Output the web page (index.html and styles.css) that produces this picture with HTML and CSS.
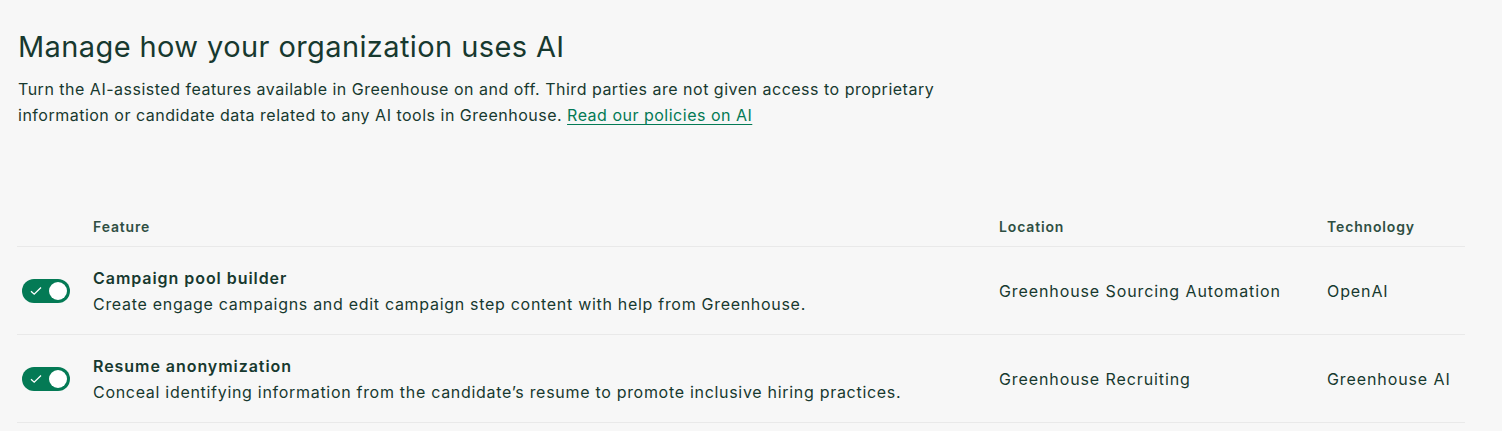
FILE: index.html
```html
<!DOCTYPE html>
<html>
<head>
<meta charset="utf-8">
<link rel="stylesheet" href="styles.css">
</head>
<body>
<main class="page">
  <h1 class="title">Manage how your organization uses AI</h1>
  <p class="intro">Turn the AI-assisted features available in Greenhouse on and off. Third parties are not given access to proprietary<br>information or candidate data related to any AI tools in Greenhouse. <a href="#" class="link">Read our policies on AI</a></p>

  <div class="table">
    <div class="row head">
      <div class="cell"></div>
      <div class="cell">Feature</div>
      <div class="cell">Location</div>
      <div class="cell">Technology</div>
    </div>
    <div class="row">
      <div class="cell toggle-cell">
        <span class="toggle">
          <svg class="check" width="12" height="10" viewBox="0 0 12 10"><path d="M1 5.2 L4.2 8.2 L11 1.5" fill="none" stroke="#fff" stroke-width="1.3"/></svg>
          <span class="knob"></span>
        </span>
      </div>
      <div class="cell">
        <div class="name">Campaign pool builder</div>
        <div class="desc">Create engage campaigns and edit campaign step content with help from Greenhouse.</div>
      </div>
      <div class="cell">Greenhouse Sourcing Automation</div>
      <div class="cell">OpenAI</div>
    </div>
    <div class="row">
      <div class="cell toggle-cell">
        <span class="toggle">
          <svg class="check" width="12" height="10" viewBox="0 0 12 10"><path d="M1 5.2 L4.2 8.2 L11 1.5" fill="none" stroke="#fff" stroke-width="1.3"/></svg>
          <span class="knob"></span>
        </span>
      </div>
      <div class="cell">
        <div class="name">Resume anonymization</div>
        <div class="desc">Conceal identifying information from the candidate’s resume to promote inclusive hiring practices.</div>
      </div>
      <div class="cell">Greenhouse Recruiting</div>
      <div class="cell">Greenhouse AI</div>
    </div>
  </div>
</main>
</body>
</html>
```

FILE: styles.css
```css
html, body {
  margin: 0;
  padding: 0;
  background: #f7f7f7;
}
body {
  font-family: "Inter", "Noto Sans", sans-serif;
  color: #17392f;
}
.page {
  padding: 28px 37px 0 17px;
}
.title {
  margin: 0 0 0 1px;
  font-size: 29px;
  font-weight: 400;
  line-height: 38px;
  letter-spacing: 0.4px;
}
.intro {
  margin: 10px 0 0 1px;
  font-size: 16px;
  line-height: 26px;
  letter-spacing: 0.5px;
}
.link {
  color: #047a55;
  text-decoration: underline;
  text-underline-offset: 3px;
}
.table {
  margin-top: 90px;
}
.row {
  display: grid;
  grid-template-columns: 76px 906px 328px 1fr;
  border-bottom: 1px solid #e9e9e9;
  height: 87px;
  align-items: center;
}
.row.head {
  height: 28px;
  align-items: start;
  font-weight: 600;
  color: #2f4f43;
}
.cell {
  font-size: 16px;
  letter-spacing: 0.9px;
}
.head .cell {
  font-size: 14px;
  letter-spacing: 0.85px;
}
.toggle-cell {
  padding-left: 5px;
  display: flex;
}
.toggle {
  width: 48px;
  height: 24px;
  border-radius: 12px;
  background: #047a55;
  display: flex;
  align-items: center;
  justify-content: space-between;
  padding: 0 3px 0 8px;
  box-sizing: border-box;
}
.knob {
  width: 18px;
  height: 18px;
  border-radius: 50%;
  background: #fff;
}
.name {
  font-weight: 600;
  line-height: 26px;
  letter-spacing: 0.95px;
}
.desc {
  line-height: 26px;
  letter-spacing: 0.7px;
}
```
